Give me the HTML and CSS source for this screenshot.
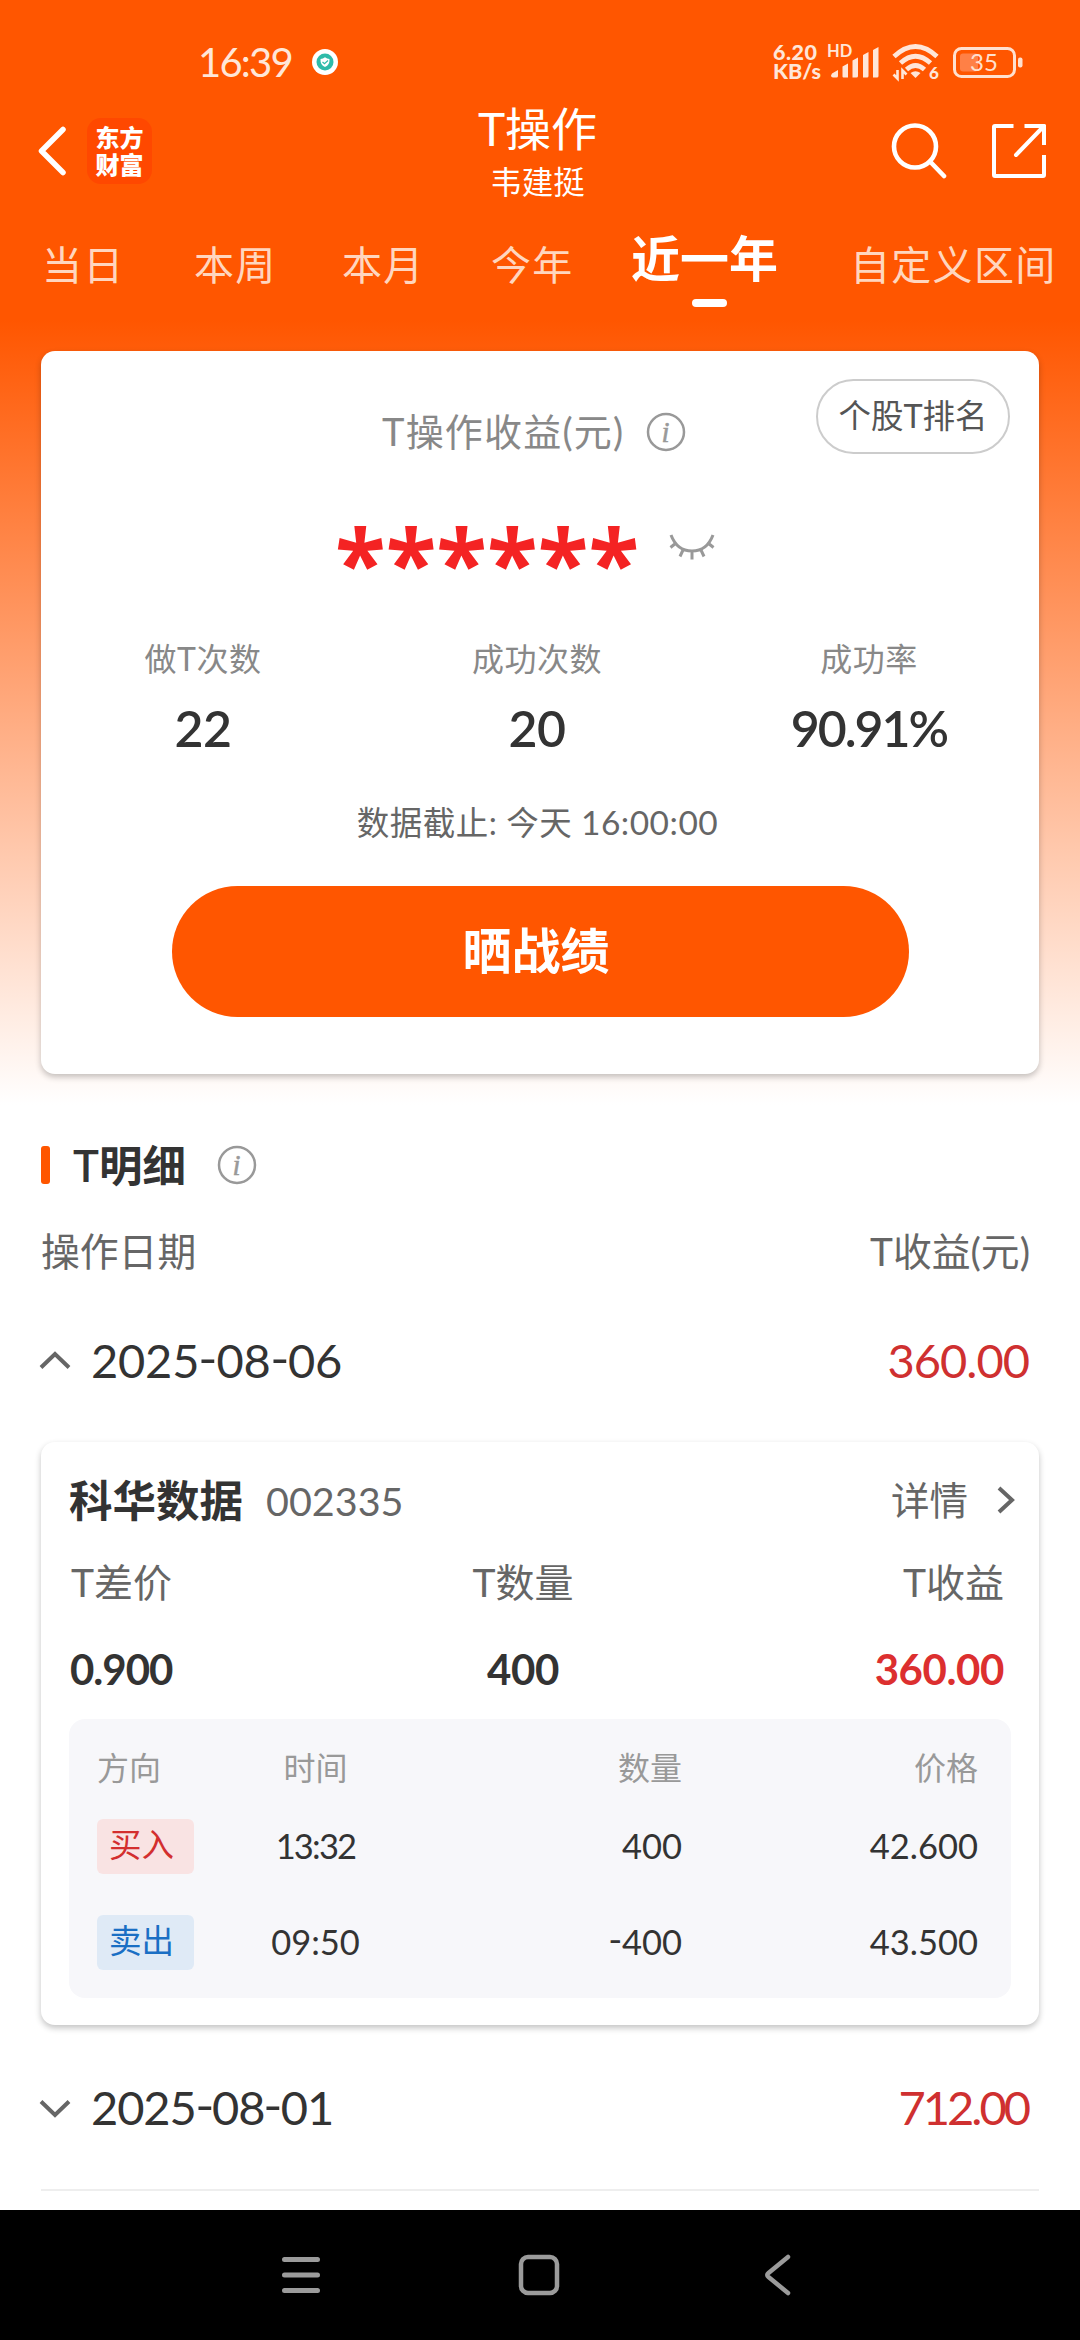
FILE: index.html
```html
<!DOCTYPE html>
<html lang="zh-CN">
<head>
<meta charset="utf-8">
<title>T操作</title>
<link rel="stylesheet" href="styles.css">
</head>
<body>
<div class="screen">
  <div class="hero">
    <div class="status">
      <span class="clock">16:39</span>
      <svg class="shield" width="26" height="26" viewBox="0 0 26 26"><circle cx="13" cy="13" r="13" fill="#fff"/><circle cx="13" cy="13" r="8.5" fill="#2fbba9"/><path d="M8.5 10q2.500 0 4.500-1.800q2 1.800 4.500 1.800q.4 6-4.500 8q-4.900-2-4.500-8z" fill="#fff"/><path d="M10.500 13l2 1.800l3.500-3.300" fill="none" stroke="#2fbba9" stroke-width="1.200"/></svg>
      <span class="speed"><span>6.20</span><span>KB/s</span></span>
      <span class="hd">HD</span>
      <svg class="signal" width="50" height="36" viewBox="0 0 50 36" fill="#ffe6d8"><path d="M2 29.500l6-3.500v6q0 1.500-1.500 1.500h-3.500q-2 0-2-2zM12.500 22.500l5.500-3v14h-4.500q-1 0-1-1zM22.500 16.500l5.500-3v18.500q0 1.500-1.500 1.500h-4zM33 11l5.500-3v24q0 1.500-1.500 1.500h-4zM43 6l5.500-3v29q0 1.500-1.500 1.500h-4z"/></svg>
      <svg class="wifi" width="48" height="44" viewBox="0 -4 48 44"><g fill="none" stroke="#ffe6d8" stroke-width="4.800"><path d="M2 12.500q21.500-20 43 0"/><path d="M8.500 19q15-13.500 30 0"/><path d="M14.500 25.500q9-8 18 0"/></g><path d="M18.500 29q5-3.500 10 0l-5 5z" fill="#ffe6d8"/><path d="M5.500 26v8.500l-4-4M10.500 35v-8.500l4 4" fill="none" stroke="#ffe6d8" stroke-width="2.600"/><text x="37" y="34.500" class="six">6</text></svg>
      <svg class="battery" width="70" height="31" viewBox="0 0 70 31"><rect x="1.500" y="1.500" width="60" height="28" rx="7" fill="none" stroke="#ffe0cf" stroke-width="3"/><rect x="7" y="6.500" width="18" height="18" rx="3" fill="#ff8046"/><rect x="65" y="10.500" width="4.500" height="10" rx="2" fill="#ffe0cf"/><text x="31" y="24" text-anchor="middle" class="level">35</text></svg>
    </div>
    <header class="header">
      <div class="left">
        <svg width="28" height="50" viewBox="0 0 28 50"><path d="M25 3.500L3.500 25L25 46.500" fill="none" stroke="#fff" stroke-width="5.500" stroke-linecap="round" stroke-linejoin="round"/></svg>
        <div class="logo"><span>东方</span><span>财富</span></div>
      </div>
      <div class="titles"><h1>T操作</h1><p>韦建挺</p></div>
      <div class="actions">
        <svg width="56" height="56" viewBox="0 0 56 56" fill="none" stroke="#fff" stroke-width="4.600" stroke-linecap="round"><circle cx="24" cy="23.500" r="21"/><path d="M39 38.500L53 53"/></svg>
        <svg width="56" height="56" viewBox="0 0 56 56" fill="none" stroke="#fff" stroke-width="4" stroke-linejoin="round"><path d="M22.500 3H4q-1 0-1 1V52q0 1 1 1H52q1 0 1-1V32"/><path d="M33.500 3H53V22"/><path d="M53 3L25 32" stroke-linecap="round"/></svg>
      </div>
    </header>
    <nav class="tabs"><span>当日</span><span>本周</span><span>本月</span><span>今年</span><span class="active">近一年</span><span>自定义区间</span></nav>
    <section class="card summary">
      <div class="profit-head">
        <span class="profit-label">T操作收益(元)</span>
        <svg class="info" width="40" height="40" viewBox="0 0 40 40"><circle cx="20" cy="20" r="18" fill="none" stroke="#999" stroke-width="2.500"/><text x="19.500" y="29.500" text-anchor="middle" class="i">i</text></svg>
        <span class="pill">个股T排名</span>
      </div>
      <div class="masked"><span class="stars">******</span>
        <svg width="46" height="28" viewBox="0 0 46 28" fill="none" stroke="#999" stroke-width="3"><path d="M2 2Q8 18 23 18T44 2M7 10L1.500 14.500M14.500 16L11 23.500M23 18V26.500M31.500 16L35 23.500M39 10L44.500 14.500"/></svg>
      </div>
      <div class="stats">
        <div><span>做T次数</span><b>22</b></div>
        <div><span>成功次数</span><b>20</b></div>
        <div><span>成功率</span><b class="rate">90.91%</b></div>
      </div>
      <p class="asof">数据截止: 今天 <span>16:00:00</span></p>
      <div class="share">晒战绩</div>
    </section>
  </div>

  <main class="details">
    <div class="section-title"><i class="bar"></i><h2>T明细</h2>
      <svg class="info" width="40" height="40" viewBox="0 0 40 40"><circle cx="20" cy="20" r="18" fill="none" stroke="#999" stroke-width="2.500"/><text x="19.500" y="29.500" text-anchor="middle" class="i">i</text></svg>
    </div>
    <div class="columns"><span>操作日期</span><span>T收益(元)</span></div>
    <div class="day open">
      <svg width="32" height="20" viewBox="0 0 32 20"><path d="M2 17.500L16 4L30 17.500" fill="none" stroke="#666" stroke-width="4"/></svg>
      <span class="date">2025<i>-</i>08<i>-</i>06</span><span class="amount">360.00</span>
    </div>
    <section class="card trade">
      <div class="stock"><b>科华数据</b><span class="code">002335</span><span class="more">详情</span>
        <svg width="20" height="30" viewBox="0 0 20 30"><path d="M3 3L16 15L3 27" fill="none" stroke="#666" stroke-width="4"/></svg>
      </div>
      <div class="figures labels"><span>T差价</span><span>T数量</span><span>T收益</span></div>
      <div class="figures values"><span>0.900</span><span>400</span><span class="red">360.00</span></div>
      <div class="orders">
        <div class="order head"><span>方向</span><span>时间</span><span>数量</span><span>价格</span></div>
        <div class="order"><span><em class="buy">买入</em></span><span class="tight">13:32</span><span>400</span><span>42.600</span></div>
        <div class="order"><span><em class="sell">卖出</em></span><span>09:50</span><span><i>-</i>400</span><span>43.500</span></div>
      </div>
    </section>
    <div class="day closed">
      <svg width="32" height="20" viewBox="0 0 32 20"><path d="M2 2.500L16 16L30 2.500" fill="none" stroke="#666" stroke-width="4"/></svg>
      <span class="date narrow">2025<i>-</i>08<i>-</i>01</span><span class="amount narrow">712.00</span>
    </div>
  </main>

  <footer class="navbar">
    <svg width="38" height="40" viewBox="0 0 38 40" stroke="#9b9b9b" stroke-width="5" stroke-linecap="round"><path d="M2.500 4.500H35.500M2.500 20H35.500M2.500 35.500H35.500"/></svg>
    <svg width="42" height="42" viewBox="0 0 42 42"><rect x="3" y="3" width="36" height="36" rx="7" fill="none" stroke="#9b9b9b" stroke-width="4.500"/></svg>
    <svg width="28" height="42" viewBox="0 0 28 42"><path d="M25 3L5.500 19Q3 21 5.500 23L25 39" fill="none" stroke="#9b9b9b" stroke-width="4.500" stroke-linecap="round"/></svg>
  </footer>
</div>
</body>
</html>
```
FILE: styles.css
```css
* { box-sizing: border-box; margin: 0; padding: 0; }
body { width: 1080px; background: #fff; color: #333; font-family: Lato, "Noto Sans CJK SC", sans-serif; }
svg { display: block; flex: none; }
i, em { font-style: normal; }
.screen { width: 1080px; height: 2340px; display: flex; flex-direction: column; overflow: hidden; white-space: nowrap; }
.hero { height: 1105px; flex: none; background: linear-gradient(#ff5600 0, #ff5600 320px, #fff 1105px); }

.status { height: 100px; padding: 24px 0 0 198px; display: flex; align-items: center; color: #ffe6d8; }
.clock { width: 114px; font-size: 40px; letter-spacing: -1.8px; }
.speed { width: 54px; margin-left: 435px; display: flex; flex-direction: column; font-size: 21.500px; line-height: 19px; font-weight: 900; }
.speed span:first-child { letter-spacing: .5px; }
.hd { width: 25px; height: 36px; font-size: 16.500px; line-height: 15px; font-weight: 700; }
.signal { margin-left: -22px; }
.wifi { margin-left: 12px; }
.battery { margin-left: 13px; }
.six { font: 900 17px Lato, sans-serif; fill: #ffe6d8; }
.level { font: 400 24px Lato, sans-serif; fill: #ffe0cf; }

.header { height: 102px; padding: 0 33px 0 26px; display: grid; grid-template-columns: 1fr auto 1fr; align-items: center; color: #fff; }
.left { display: flex; align-items: center; margin-left: 12px; gap: 21px; }
.logo { width: 65px; height: 66px; border-radius: 14px; background: #ff4800; display: flex; flex-direction: column; align-items: center; justify-content: center; font-weight: 900; font-size: 24px; line-height: 27px; }
.titles { text-align: center; padding-left: 2px; }
.titles h1 { font-size: 46px; font-weight: 400; line-height: 58px; }
.titles p { font-size: 31.500px; line-height: 40px; margin-top: 4px; }
.actions { display: flex; justify-content: flex-end; gap: 44px; }

.tabs { height: 128px; padding-left: 42px; display: grid; grid-template-columns: 152px 148px 149px 140px 219px auto; font-size: 40px; letter-spacing: 1.3px; line-height: 127px; color: #ffd6bf; }
.tabs .active { position: relative; color: #fff; font-size: 49px; font-weight: 600; line-height: 112px; letter-spacing: 0; }
.active::after { content: ""; position: absolute; left: 61px; top: 97px; width: 35px; height: 8px; border-radius: 4px; background: #fff; }

.card { margin-left: 41px; width: 998px; background: #fff; border-radius: 14px; box-shadow: 0 3px 6px rgba(0,0,0,.24); }
.summary { height: 723px; margin-top: 21px; display: flex; flex-direction: column; align-items: center; }
.profit-head { width: 100%; height: 162px; padding: 0 29px 0 341px; display: flex; align-items: center; color: #888; }
.profit-label { width: 243px; font-size: 38px; letter-spacing: 1.200px; padding-bottom: 5px; }
.info { margin-left: 21px; }
.i { font: italic 29px "Liberation Serif", serif; fill: #999; stroke: #999; stroke-width: .5px; }
.pill { margin: 0 0 31px auto; width: 194px; height: 75px; border: 2px solid #ccc; border-radius: 38px; color: #555; font-size: 32.500px; line-height: 69px; text-align: center; }
.masked { width: 100%; height: 110px; padding-left: 294px; display: flex; }
.stars { width: 334px; color: #f42323; font: 700 93px/96px "Open Sans", sans-serif; }
.masked svg { margin-top: 20px; }
.stats { width: 100%; display: grid; grid-template-columns: 324px 344px 320px; text-align: center; }
.stats div { display: flex; flex-direction: column; }
.stats span { font-size: 32px; line-height: 72px; letter-spacing: .5px; color: #888; }
.stats b { font-size: 50px; line-height: 66px; font-weight: 600; letter-spacing: -.5px; }
.stats .rate { letter-spacing: -2px; }
.asof { margin-top: 31px; padding-right: 5px; font-size: 32.500px; line-height: 61px; letter-spacing: .5px; color: #666; }
.asof span { font-size: 33.500px; }
.share { margin-top: 33px; width: 737px; height: 131px; border-radius: 66px; background: #ff5600; color: #fff; font-size: 49px; font-weight: 600; line-height: 128px; text-align: center; padding-right: 8px; }

.details { height: 1105px; flex: none; }
.section-title { height: 120px; padding-left: 41px; display: flex; align-items: center; }
.bar { width: 9px; height: 38px; border-radius: 3px; background: #ff5600; }
.section-title h2 { width: 123px; margin-left: 23px; padding-bottom: 4px; font-size: 43.500px; font-weight: 600; }
.columns { height: 54px; padding: 0 50px 0 41px; display: flex; justify-content: space-between; font-size: 38.800px; line-height: 52px; color: #666; }
.day { display: flex; align-items: center; padding: 0 51px 0 39px; font-size: 47px; }
.open { height: 163px; padding-bottom: 2px; }
.date { margin-left: 20px; letter-spacing: -.2px; }
.date i, .order i { display: inline-block; transform: translateY(-3px) scaleX(1.100); }
.amount { margin-left: auto; color: #cf3030; letter-spacing: -1px; }
.date.narrow { letter-spacing: -1.100px; }
.amount.narrow { letter-spacing: -3px; padding-right: 1px; }
.trade { height: 583px; padding: 0 28px; }
.stock { height: 116px; display: flex; align-items: center; }
.stock b { font-size: 43.500px; font-weight: 700; padding-bottom: 4px; }
.code { margin-left: 23px; font-size: 39.500px; color: #666; }
.more { margin-left: auto; font-size: 38.500px; color: #666; padding-bottom: 4px; }
.stock svg { margin: 0 -5px 0 28px; }
.figures { display: grid; grid-template-columns: 320px 264px 349px; padding-left: 2px; text-align: center; }
.figures span:first-child { text-align: left; }
.figures span:last-child { text-align: right; }
.labels { height: 50px; line-height: 49px; font-size: 39px; color: #666; }
.values { height: 111px; line-height: 122px; font-size: 42px; font-weight: 700; letter-spacing: -.4px; }
.values span:first-child { letter-spacing: -1px; margin-left: -1px; }
.red { color: #dc2f2f; }
.orders { height: 279px; border-radius: 16px; background: #f7f7fa; padding: 0 34px 0 28px; }
.order { height: 96px; display: grid; grid-template-columns: 157px 123px 305px 296px; align-items: center; font-size: 34.500px; line-height: 40px; }
.order span { padding-bottom: 2px; }
.order span:nth-child(2) { text-align: center; }
.order span.tight { letter-spacing: -1.800px; }
.order span:nth-child(n+3) { text-align: right; }
.head { height: 80px; padding-top: 20px; font-size: 32px; color: #999; }
.order em { display: block; width: 97px; height: 55px; border-radius: 6px; padding-left: 12px; font-size: 32.500px; line-height: 51px; }
.buy { background: #f9e3e3; color: #d32f2f; }
.sell { background: #dfeaf6; color: #1a6fc4; }
.closed { height: 166px; margin: 0 41px; padding: 0 10px 0 0; border-bottom: 2px solid #eee; }
.closed svg { margin: 3px 0 0 -2px; }

.navbar { height: 130px; background: #000; display: grid; grid-template-columns: 361px 356px 1fr; align-items: center; }
.navbar svg { margin-left: 282px; }
.navbar svg:nth-child(2) { margin-left: 157px; }
.navbar svg:nth-child(3) { margin-left: 46px; }
```
